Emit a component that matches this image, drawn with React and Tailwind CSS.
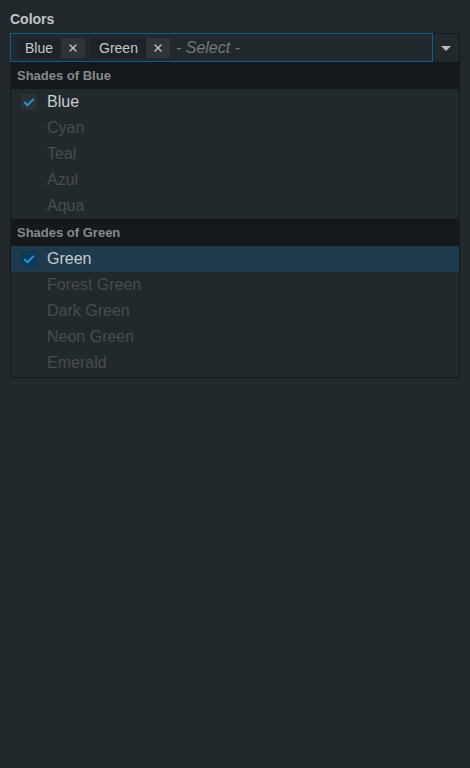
import { X } from 'lucide-react';

const groups = [
  {
    label: 'Shades of Blue',
    options: [
      { name: 'Blue', selected: true },
      { name: 'Cyan' },
      { name: 'Teal' },
      { name: 'Azul' },
      { name: 'Aqua' },
    ],
  },
  {
    label: 'Shades of Green',
    options: [
      { name: 'Green', selected: true, active: true },
      { name: 'Forest Green' },
      { name: 'Dark Green' },
      { name: 'Neon Green' },
      { name: 'Emerald' },
    ],
  },
];

function Check() {
  return (
    <svg viewBox="0 0 16 16" className="w-[14px] h-[14px]">
      <path d="M2.5 8l3.8 3.6L13.5 4.5" fill="none" stroke="#1e9ad8" strokeWidth="2.2" />
    </svg>
  );
}

function Tag({ label }) {
  return (
    <div className="flex h-[20px] rounded-[3px] overflow-hidden text-[14px] text-[#c3c7c9]">
      <span className="bg-[#1d2326] pl-[8px] pr-[8px] leading-[20px]">{label}</span>
      <span className="bg-[#2e3438] w-[24px] flex items-center justify-center">
        <X className="w-[12px] h-[12px]" strokeWidth={2.5} />
      </span>
    </div>
  );
}

export default function App() {
  return (
    <div
      className="min-h-[768px] bg-[#22292d] px-[10px] pt-[10px]"
      style={{ fontFamily: '"Liberation Sans", Arial, sans-serif' }}
    >
      <p className="text-[14px] font-bold text-[#c0c4c6] leading-[18px] mb-[5px]">Colors</p>
      <div className="flex h-[29px]">
        <div className="flex-1 flex items-center gap-[6px] border border-[#0b5d8f] pl-[6px] bg-[#22292d]">
          <Tag label="Blue" />
          <Tag label="Green" />
          <span className="italic text-[16px] text-[#73787b]">- Select -</span>
        </div>
        <div className="w-[27px] flex items-center justify-center border-t border-r border-[#15191c] rounded-tr-[3px]">
          <svg viewBox="0 0 10 5" className="w-[10px] h-[5px]">
            <path d="M0 0h10L5 5z" fill="#b8bcbe" />
          </svg>
        </div>
      </div>
      <div className="border border-t-0 border-[#15191c] rounded-b-[3px] pb-[1px]">
        {groups.map((g) => (
          <div key={g.label}>
            <div className="h-[27px] bg-[#16191c] px-[6px] flex items-center text-[13px] font-bold text-[#85898c]">
              {g.label}
            </div>
            {g.options.map((o) => (
              <div
                key={o.name}
                className={`h-[26px] flex items-center gap-[10px] pl-[10px] text-[16px] ${
                  o.active ? 'bg-[#1f3a4a]' : ''
                } ${o.selected ? 'text-[#c8ccce]' : 'text-[#464c50]'}`}
              >
                {o.selected ? (
                  <span
                    className={`w-[16px] h-[16px] rounded-[2px] flex items-center justify-center ${
                      o.active ? 'bg-[#0a3a5c]' : 'bg-[#2b3236]'
                    }`}
                  >
                    <Check />
                  </span>
                ) : (
                  <span className="w-[16px] h-[16px]" />
                )}
                <span>{o.name}</span>
              </div>
            ))}
          </div>
        ))}
      </div>
    </div>
  );
}
